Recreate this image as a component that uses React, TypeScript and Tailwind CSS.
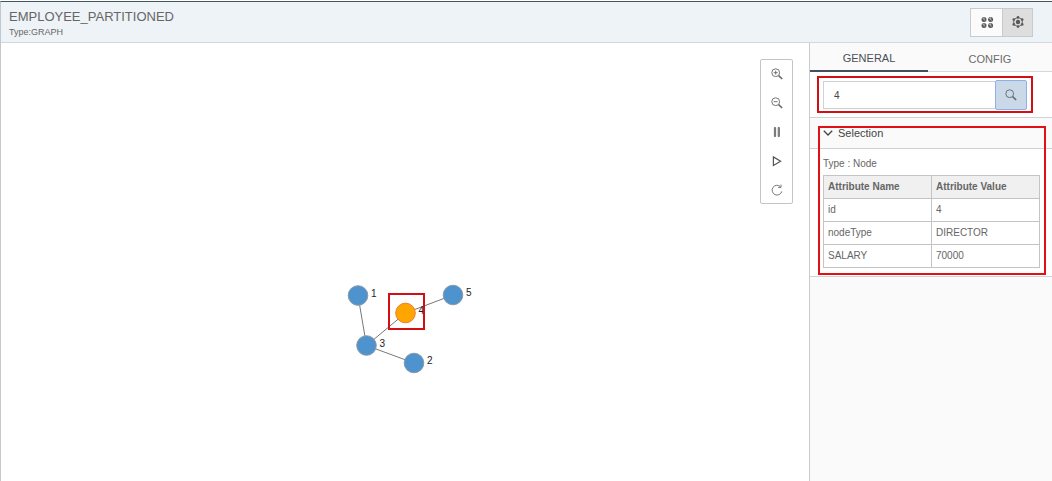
import React, { useState } from "react";

type GraphNode = { id: string; x: number; y: number; selected?: boolean };

const nodes: GraphNode[] = [
  { id: "1", x: 357, y: 252.5 },
  { id: "5", x: 452, y: 252 },
  { id: "3", x: 365.5, y: 302.5 },
  { id: "2", x: 413, y: 320 },
  { id: "4", x: 404.5, y: 270, selected: true },
];

const edges: [string, string][] = [
  ["1", "3"],
  ["3", "4"],
  ["4", "5"],
  ["3", "2"],
];

const attributes = [
  { name: "id", value: "4" },
  { name: "nodeType", value: "DIRECTOR" },
  { name: "SALARY", value: "70000" },
];

const find = (id: string) => nodes.find((n) => n.id === id)!;

function Magnifier({ sign }: { sign?: "plus" | "minus" }) {
  return (
    <svg viewBox="0 0 12 12" className="size-3" fill="none" stroke="#666" strokeWidth="0.9">
      <circle cx="4.7" cy="4.7" r="3.9" />
      <path d="M7.6 7.6L11.2 11" strokeWidth="1.5" />
      {sign && <path d="M2.7 4.7h4" />}
      {sign === "plus" && <path d="M4.7 2.7v4" />}
    </svg>
  );
}

function PauseIcon() {
  return (
    <svg viewBox="0 0 12 12" className="size-3" fill="#aaa" stroke="#666" strokeWidth="0.9">
      <path d="M3.4 1.5v9h1.2v-9zM7.2 1.5v9h1.2v-9z" />
    </svg>
  );
}

function PlayIcon() {
  return (
    <svg viewBox="0 0 12 12" className="size-3" fill="none" stroke="#555" strokeWidth="1.2">
      <path d="M2.4 1.9v8.6L9.6 6.2z" />
    </svg>
  );
}

function RefreshIcon() {
  return (
    <svg viewBox="0 0 12 12" className="size-3" fill="none" stroke="#777" strokeWidth="1">
      <path d="M9.4 2.6A4.9 4.9 0 1 0 10.8 7.4" />
      <path d="M10 0.6v2.8H7" />
    </svg>
  );
}

function GridIcon() {
  const dots = [
    [3, 3.4],
    [9.6, 3.4],
    [3, 9.4],
    [9.6, 9.4],
  ];
  return (
    <svg viewBox="0 0 12 12" className="size-3" overflow="visible">
      {dots.map(([x, y]) => (
        <g key={`${x}-${y}`}>
          <circle cx={x} cy={y} r="2.5" fill="#5a5a5a" />
          <path d={`M${x - 1.4} ${y - 1.2}l2.6 2.2M${x} ${y - 2}v1.6`} stroke="#ddd" strokeWidth="0.7" />
        </g>
      ))}
    </svg>
  );
}

function NetworkIcon() {
  return (
    <svg viewBox="0 0 12 12" className="size-3" fill="none" stroke="#666" strokeWidth="1">
      <path d="M6 1.2L10.2 3.6V8.4L6 10.8L1.8 8.4V3.6Z" />
      <g fill="#5a5a5a" stroke="none">
        <circle cx="6" cy="6" r="2.2" />
        <circle cx="6" cy="1.4" r="1.3" />
        <circle cx="10.2" cy="3.6" r="1.3" />
        <circle cx="10.2" cy="8.4" r="1.3" />
        <circle cx="6" cy="10.6" r="1.3" />
        <circle cx="1.8" cy="8.4" r="1.3" />
        <circle cx="1.8" cy="3.6" r="1.3" />
      </g>
    </svg>
  );
}

const tools = [
  { label: "Zoom in", icon: <Magnifier sign="plus" /> },
  { label: "Zoom out", icon: <Magnifier sign="minus" /> },
  { label: "Pause", icon: <PauseIcon /> },
  { label: "Play", icon: <PlayIcon /> },
  { label: "Refresh", icon: <RefreshIcon /> },
];

function GraphCanvas() {
  return (
    <main className="relative flex min-w-0 flex-1 items-start justify-end bg-white">
      <svg className="absolute inset-0 h-full w-full" role="img" aria-label="Graph">
        {edges.map(([a, b]) => (
          <line
            key={a + b}
            x1={find(a).x}
            y1={find(a).y}
            x2={find(b).x}
            y2={find(b).y}
            stroke="#777"
            strokeWidth="1"
          />
        ))}
        {nodes.map((n) => (
          <g key={n.id}>
            <circle
              cx={n.x}
              cy={n.y}
              r="9.8"
              fill={n.selected ? "#ffa500" : "#4e93cd"}
              stroke={n.selected ? "#f47a2a" : "#8a9aa8"}
              strokeWidth="1"
            />
            <text x={n.x + 13} y={n.y + 1} fontSize="10" fill="#222">
              {n.id}
            </text>
          </g>
        ))}
        <rect x="388" y="251" width="35" height="35" fill="none" stroke="#d40f14" strokeWidth="2" />
      </svg>
      <div className="relative mt-4 mr-4 flex flex-col gap-0.5 rounded-xs border border-[#c4c4c4] bg-white">
        {tools.map((t) => (
          <button
            key={t.label}
            type="button"
            aria-label={t.label}
            className="flex h-[27px] w-[31px] items-center justify-center"
          >
            {t.icon}
          </button>
        ))}
      </div>
    </main>
  );
}

function Sidebar() {
  const [query, setQuery] = useState("4");
  return (
    <aside className="flex w-[243px] shrink-0 flex-col border-l border-[#c8ccd0] bg-[#fafafa]">
      <div role="tablist" className="flex border-b border-[#d6d9dc] text-[11px]">
        <button
          type="button"
          role="tab"
          aria-selected="true"
          className="-mb-px h-[29px] w-[118px] border-b-2 border-[#454f5b] pt-1 text-[#4a4f55]"
        >
          GENERAL
        </button>
        <button type="button" role="tab" aria-selected="false" className="h-7 flex-1 pt-1 text-[#6b6b6b]">
          CONFIG
        </button>
      </div>

      <section className="relative border-b border-[#d0d3d6] bg-white pt-2 pr-[25px] pb-[7px] pl-[13px]">
        <form className="flex items-center" onSubmit={(e) => e.preventDefault()}>
          <input
            aria-label="Search"
            value={query}
            onChange={(e) => setQuery(e.target.value)}
            className="h-7 min-w-0 flex-1 border border-r-0 border-[#cfd2d5] bg-white px-[10px] text-[10px] text-[#444] outline-none"
          />
          <button
            type="submit"
            aria-label="Run search"
            className="flex h-[30px] w-8 items-center justify-center rounded-xs border border-[#8fb0e6] bg-[#c9d9e8]"
          >
            <Magnifier />
          </button>
        </form>
        <div className="pointer-events-none absolute top-1 right-[19px] bottom-1 left-[7px] border-2 border-[#d40f14]" />
      </section>

      <section className="relative border-b border-[#d0d3d6] bg-white">
        <button
          type="button"
          aria-expanded="true"
          className="flex h-[31px] w-full items-center gap-[5px] border-b border-[#d0d3d6] bg-[#fafafa] px-[13px] text-[11px] text-[#444]"
        >
          <svg viewBox="0 0 10 6" className="h-[6px] w-[10px]" fill="none" stroke="#444" strokeWidth="1.3">
            <path d="M0.8 0.8L5 5L9.2 0.8" />
          </svg>
          Selection
        </button>
        <div className="pt-2 pr-3 pb-2 pl-[13px] text-[10px] leading-[14px] text-[#666]">
          <p className="mb-1">Type : Node</p>
          <table className="w-full table-fixed border-collapse text-left">
            <thead>
              <tr className="h-[23px] bg-[#f0f0f0]">
                <th className="border border-[#c4c4c4] px-1 font-bold">Attribute Name</th>
                <th className="border border-[#c4c4c4] px-1 font-bold">Attribute Value</th>
              </tr>
            </thead>
            <tbody>
              {attributes.map((a) => (
                <tr key={a.name} className="h-[23px]">
                  <td className="border border-[#c4c4c4] px-1">{a.name}</td>
                  <td className="border border-[#c4c4c4] px-1">{a.value}</td>
                </tr>
              ))}
            </tbody>
          </table>
        </div>
        <div className="pointer-events-none absolute top-2 right-[6px] bottom-px left-2 border-2 border-[#e01014]" />
      </section>
    </aside>
  );
}

export default function App() {
  return (
    <div className="flex min-h-screen flex-col bg-white pt-px font-['Liberation_Sans',Arial,sans-serif]">
      <div className="flex flex-1 flex-col border-t border-l border-t-[#45575c] border-l-[#c4c8cc]">
        <header className="flex h-[41px] items-center justify-between border-b border-[#d3d8dc] bg-[#eef3f7] pr-[19px] pl-2">
          <div className="pt-px text-[#666]">
            <h1 className="text-[13px] leading-[18px]">EMPLOYEE_PARTITIONED</h1>
            <p className="text-[9px] leading-3">Type:GRAPH</p>
          </div>
          <div className="flex border border-[#c8cbce]">
            <button
              type="button"
              aria-label="Grid layout"
              className="flex h-[27px] w-8 items-center justify-center border-r border-[#c8cbce] bg-[#fbfbfb]"
            >
              <GridIcon />
            </button>
            <button
              type="button"
              aria-label="Network layout"
              aria-pressed="true"
              className="flex h-[27px] w-[29px] items-center justify-center bg-[#dedede]"
            >
              <NetworkIcon />
            </button>
          </div>
        </header>
        <div className="flex flex-1">
          <GraphCanvas />
          <Sidebar />
        </div>
      </div>
    </div>
  );
}
